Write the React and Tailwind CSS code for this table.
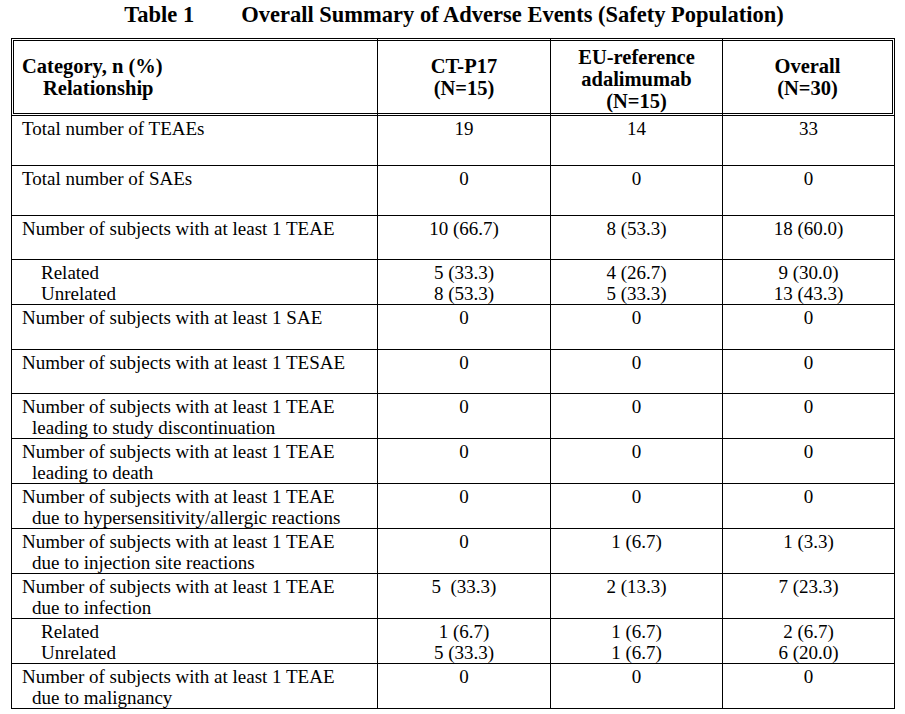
import React from "react";

const rows = [
  { h: "h-[50px]", label: ["Total number of TEAEs"], vals: [["19"], ["14"], ["33"]] },
  { h: "h-[50px]", label: ["Total number of SAEs"], vals: [["0"], ["0"], ["0"]] },
  { h: "h-[44px]", label: ["Number of subjects with at least 1 TEAE"], vals: [["10 (66.7)"], ["8 (53.3)"], ["18 (60.0)"]] },
  {
    h: "h-[45px]",
    sub: true,
    label: ["Related", "Unrelated"],
    vals: [["5 (33.3)", "8 (53.3)"], ["4 (26.7)", "5 (33.3)"], ["9 (30.0)", "13 (43.3)"]],
  },
  { h: "h-[45px]", label: ["Number of subjects with at least 1 SAE"], vals: [["0"], ["0"], ["0"]] },
  { h: "h-[44px]", label: ["Number of subjects with at least 1 TESAE"], vals: [["0"], ["0"], ["0"]] },
  {
    h: "h-[45px]",
    label: ["Number of subjects with at least 1 TEAE", "leading to study discontinuation"],
    vals: [["0"], ["0"], ["0"]],
  },
  {
    h: "h-[45px]",
    label: ["Number of subjects with at least 1 TEAE", "leading to death"],
    vals: [["0"], ["0"], ["0"]],
  },
  {
    h: "h-[45px]",
    label: ["Number of subjects with at least 1 TEAE", "due to hypersensitivity/allergic reactions"],
    vals: [["0"], ["0"], ["0"]],
  },
  {
    h: "h-[45px]",
    label: ["Number of subjects with at least 1 TEAE", "due to injection site reactions"],
    vals: [["0"], ["1 (6.7)"], ["1 (3.3)"]],
  },
  {
    h: "h-[44px]",
    label: ["Number of subjects with at least 1 TEAE", "due to infection"],
    vals: [["5  (33.3)"], ["2 (13.3)"], ["7 (23.3)"]],
  },
  {
    h: "h-[45px]",
    sub: true,
    label: ["Related", "Unrelated"],
    vals: [["1 (6.7)", "5 (33.3)"], ["1 (6.7)", "1 (6.7)"], ["2 (6.7)", "6 (20.0)"]],
  },
  {
    h: "h-[45px]",
    label: ["Number of subjects with at least 1 TEAE", "due to malignancy"],
    vals: [["0"], ["0"], ["0"]],
  },
];

export default function App() {
  return (
    <main className="min-h-screen bg-white text-black font-['Liberation_Serif',serif]">
      {/* TITLE */}
      <div className="h-[38px] pt-[2px] flex justify-center gap-[47px] text-[22.5px] leading-[25px] font-bold pl-[3px]">
        <span>Table 1</span>
        <span>Overall Summary of Adverse Events (Safety Population)</span>
      </div>

      {/* TABLE */}
      <table className="ml-[11px] w-[884px] table-fixed border-separate border-spacing-0 text-[19px] leading-[21px]">
        <colgroup>
          <col className="w-[367px]" />
          <col className="w-[173px]" />
          <col className="w-[172px]" />
          <col className="w-[172px]" />
        </colgroup>
        <thead>
          <tr className="h-[78px] font-bold text-[20.5px] leading-[22px]">
            <th className="border-y-[3px] border-l-[3px] border-r border-double border-r-solid border-black text-left font-bold pl-[8px] align-middle">
              <div>Category, n (%)</div>
              <div className="pl-[21px]">Relationship</div>
            </th>
            <th className="border-y-[3px] border-r border-double border-r-solid border-black text-center align-middle">
              <div>CT-P17</div>
              <div>(N=15)</div>
            </th>
            <th className="border-y-[3px] border-r border-double border-r-solid border-black text-center align-middle pt-[4px]">
              <div>EU-reference</div>
              <div>adalimumab</div>
              <div>(N=15)</div>
            </th>
            <th className="border-y-[3px] border-r-[3px] border-double border-black text-center align-middle">
              <div>Overall</div>
              <div>(N=30)</div>
            </th>
          </tr>
        </thead>
        <tbody>
          {rows.map((r, i) => (
            <tr key={i} className={r.h}>
              <td className="border-l border-r border-b border-black align-top pt-[2px] pl-[10px]">
                {r.label.map((l, j) => (
                  <div
                    key={j}
                    className={r.sub ? "pl-[19px]" : j > 0 ? "pl-[10px]" : ""}
                  >
                    {l}
                  </div>
                ))}
              </td>
              {r.vals.map((v, k) => (
                <td key={k} className="border-r border-b border-black align-top text-center pt-[2px]">
                  {v.map((t, j) => (
                    <div key={j} className="whitespace-pre">
                      {t}
                    </div>
                  ))}
                </td>
              ))}
            </tr>
          ))}
        </tbody>
      </table>
    </main>
  );
}
